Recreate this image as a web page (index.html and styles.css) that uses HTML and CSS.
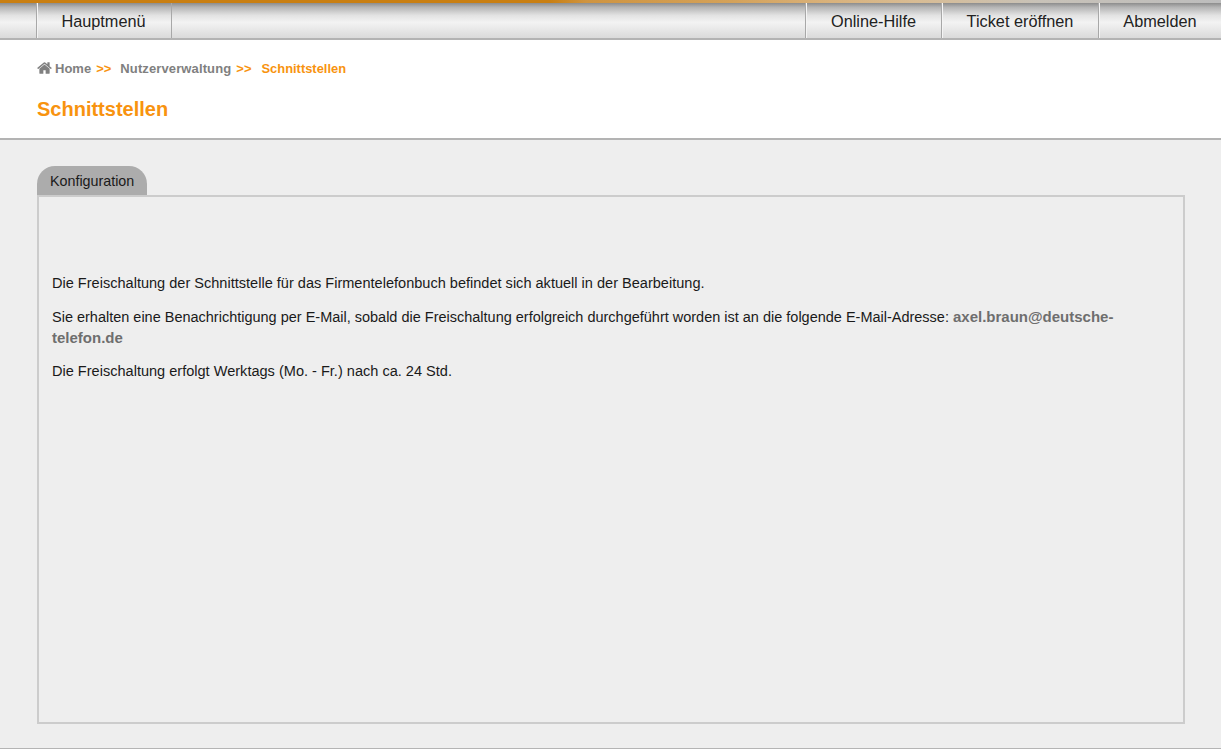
FILE: index.html
```html
<!DOCTYPE html>
<html lang="de">
<head>
<meta charset="utf-8">
<title>Schnittstellen</title>
<link rel="stylesheet" href="styles.css">
</head>
<body>
<div class="page">
  <div class="topstrip"></div>
  <nav class="nav">
    <div class="nav-spacer"></div>
    <a class="nav-item nav-main">Hauptmenü</a>
    <div class="nav-fill"></div>
    <a class="nav-item nav-help">Online-Hilfe</a>
    <a class="nav-item nav-ticket">Ticket eröffnen</a>
    <a class="nav-item nav-logout">Abmelden</a>
  </nav>
  <header class="header">
    <div class="crumbs">
      <svg class="home" viewBox="0 0 1664 1792" aria-hidden="true"><path d="M1408 992v480q0 26-19 45t-45 19h-384v-384h-256v384h-384q-26 0-45-19t-19-45v-480q0-1 .5-3t.5-3l575-474 575 474q1 2 1 6zm223-69l-62 74q-8 9-21 11h-3q-13 0-21-7l-692-577-692 577q-12 8-24 7-13-2-21-11l-62-74q-8-10-7-23.500t11-21.500l719-599q32-26 76-26t76 26l244 204v-195q0-14 9-23t23-9h192q14 0 23 9t9 23v408l219 182q10 8 11 21.500t-7 23.500z"/></svg>
      <span class="crumb">Home</span>
      <span class="sep">&gt;&gt;</span>
      <span class="crumb crumb-wide">Nutzerverwaltung</span>
      <span class="sep">&gt;&gt;</span>
      <span class="crumb current">Schnittstellen</span>
    </div>
    <h1 class="title">Schnittstellen</h1>
  </header>
  <main class="main">
    <div class="tab">Konfiguration</div>
    <section class="panel">
      <p>Die Freischaltung der Schnittstelle für das Firmentelefonbuch befindet sich aktuell in der Bearbeitung.</p>
      <p class="notice">Sie erhalten eine Benachrichtigung per E-Mail, sobald die Freischaltung erfolgreich durchgeführt worden ist an die folgende E-Mail-Adresse: <strong class="mail">axel.braun@deutsche-telefon.de</strong></p>
      <p>Die Freischaltung erfolgt Werktags (Mo. - Fr.) nach ca. 24 Std.</p>
    </section>
  </main>
</div>
</body>
</html>
```
FILE: styles.css
```css
* { box-sizing: border-box; }
html, body { margin: 0; padding: 0; }
body {
  font-family: "Liberation Sans", Arial, sans-serif;
  background: #eeeeee;
  color: #1a1a1a;
}
.page {
  height: 749px;
  display: flex;
  flex-direction: column;
  overflow: hidden;
  border-bottom: 1px solid #b4b4b4;
}
.topstrip {
  height: 3px;
  background: linear-gradient(90deg, #c97f12 0%, #c97f12 45%, #cf9440 48%, #d4a25a 60%, #d9b27c 68%, #d8bc94 75%, #c8c2b8 85%, #bdbdbd 100%);
}
.nav {
  height: 37px;
  display: flex;
  background: linear-gradient(180deg, #8c8c8c 0%, #b4b4b4 12%, #e2e2e2 35%, #f3f3f3 55%, #e8e8e8 75%, #dadada 100%);
  border-bottom: 2px solid #b3b3b3;
}
.nav-spacer { width: 36px; }
.nav-fill { flex: 1; }
.nav-item {
  display: flex;
  align-items: center;
  justify-content: center;
  padding-top: 1px;
  font-size: 16.3px;
  color: #222;
  border-left: 1px solid #a8a8a8;
  box-shadow: inset 1px 0 0 #f4f4f4;
}
.nav-main {
  width: 136px;
  padding-right: 1px;
  border-right: 1px solid #a8a8a8;
}
.nav-help { width: 136px; }
.nav-ticket { width: 157px; }
.nav-logout { width: 123px; }
.header {
  height: 100px;
  padding: 20px 37px 0;
  background: #fff;
  border-bottom: 2px solid #b3b3b3;
}
.crumbs {
  display: flex;
  align-items: center;
  height: 16px;
  font-size: 13px;
  font-weight: 700;
  color: #808080;
}
.crumb-wide { letter-spacing: .12px; }
.home { width: 15px; height: 16px; margin-right: 3px; fill: #808080; }
.sep { color: #f8930f; margin: 0 9px 0 5px; }
.current { color: #f8930f; margin-left: 1px; font-size: 12.9px; }
.title {
  margin: 21px 0 0;
  font-size: 20px;
  line-height: 24px;
  font-weight: 700;
  color: #f8930f;
}
.main {
  flex: 1;
  padding: 26px 36px 24px 37px;
  display: flex;
  flex-direction: column;
}
.tab {
  align-self: flex-start;
  width: 110px;
  height: 29px;
  padding: 7px 0 0 13px;
  font-size: 14.3px;
  line-height: 17px;
  color: #1a1a1a;
  background: #acacac;
  border-radius: 18px 18px 0 0;
}
.panel {
  flex: 1;
  padding: 76px 13px 0;
  border: 2px solid #cccccc;
  font-size: 14.55px;
  line-height: 21px;
}
.panel p { margin: 0 0 12.500px; }
.panel .notice { font-size: 14.49px; }
.mail { color: #6e6e6e; font-size: 15px; line-height: 0; }
```
